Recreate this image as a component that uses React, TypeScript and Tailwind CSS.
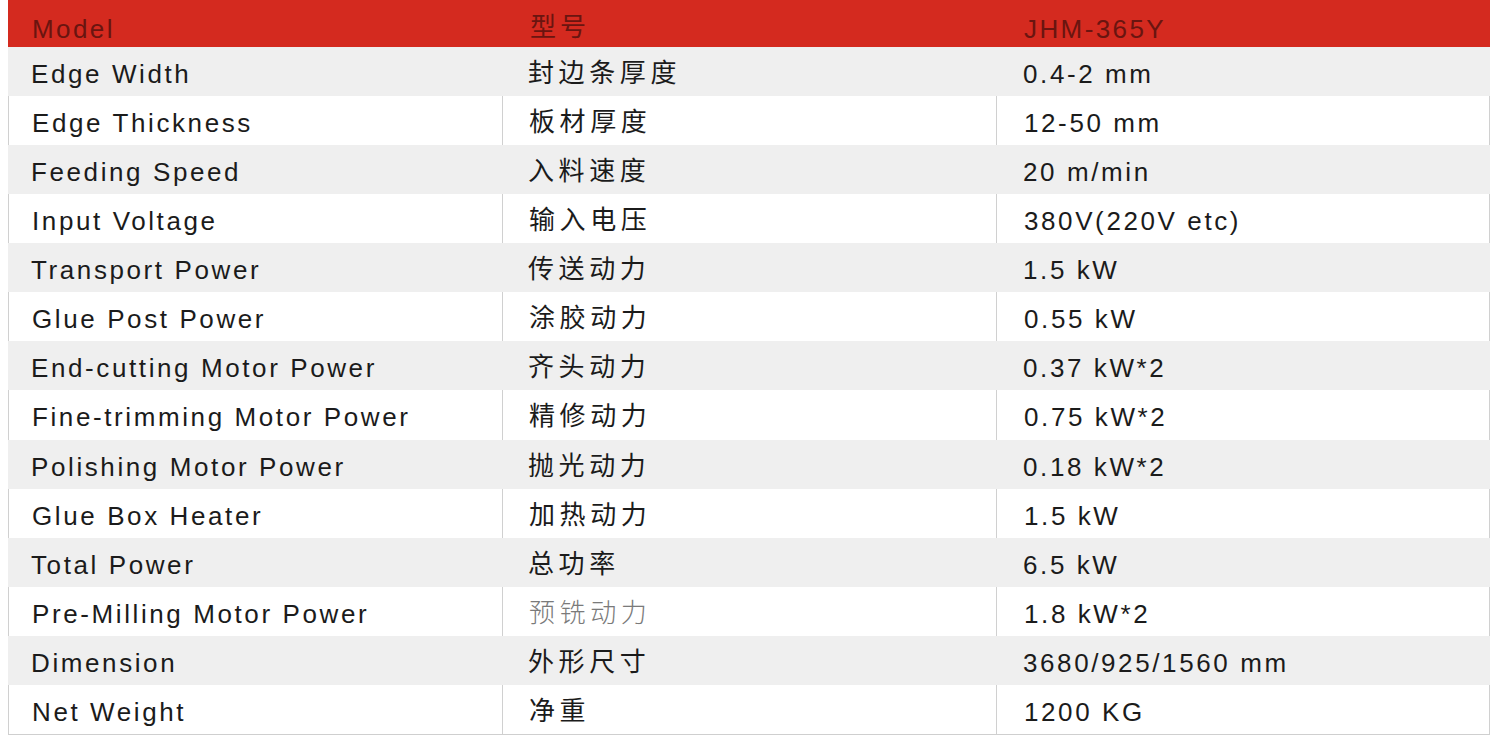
const rows: [string, string, string][] = [
  ['Edge Width', '封边条厚度', '0.4-2 mm'],
  ['Edge Thickness', '板材厚度', '12-50 mm'],
  ['Feeding Speed', '入料速度', '20 m/min'],
  ['Input Voltage', '输入电压', '380V(220V etc)'],
  ['Transport Power', '传送动力', '1.5 kW'],
  ['Glue Post Power', '涂胶动力', '0.55 kW'],
  ['End-cutting Motor Power', '齐头动力', '0.37 kW*2'],
  ['Fine-trimming Motor Power', '精修动力', '0.75 kW*2'],
  ['Polishing Motor Power', '抛光动力', '0.18 kW*2'],
  ['Glue Box Heater', '加热动力', '1.5 kW'],
  ['Total Power', '总功率', '6.5 kW'],
  ['Pre-Milling Motor Power', '预铣动力', '1.8 kW*2'],
  ['Dimension', '外形尺寸', '3680/925/1560 mm'],
  ['Net Weight', '净重', '1200 KG'],
];

const font = { fontFamily: '"Liberation Sans", "Noto Sans CJK SC", sans-serif' };

const App = () => {
  return (
    <div className="w-[1500px] h-[743px] bg-white" style={font}>
      <div className="ml-[8px] w-[1482px] border-b border-[#cfcfcf]">
        <div className="flex h-[47px] bg-[#d42a1f] text-[#6a1510] text-[26px] tracking-[2.4px]">
          <div className="w-1/3 pl-[24px] pt-[16px] leading-none">Model</div>
          <div className="w-1/3 pl-[28px] pt-[14px] leading-none tracking-[4px]">型号</div>
          <div className="w-1/3 pl-[28px] pt-[16px] leading-none">JHM-365Y</div>
        </div>
        {rows.map(([en, zh, val], i) => {
          const gray = i % 2 === 0;
          return (
            <div
              key={en}
              className={`flex h-[49.07px] text-[26px] text-[#1b1b1b] tracking-[2.6px] ${gray ? 'bg-[#efefef]' : 'bg-white'}`}
            >
              <div className={`w-1/3 flex items-center pl-[23px] pt-[6px] ${gray ? '' : 'border-l border-[#d0d0d0]'}`}>
                {en}
              </div>
              <div
                className={`w-1/3 flex items-center pl-[26px] pt-[4px] tracking-[4.6px] ${gray ? '' : 'border-l border-[#d0d0d0]'} ${i === 11 ? 'text-[#7a7a7a] font-light' : ''}`}
              >
                {zh}
              </div>
              <div className={`w-1/3 flex items-center pl-[27px] pt-[6px] ${gray ? '' : 'border-x border-[#d0d0d0]'}`}>
                {val}
              </div>
            </div>
          );
        })}
      </div>
    </div>
  );
};

export default App;
